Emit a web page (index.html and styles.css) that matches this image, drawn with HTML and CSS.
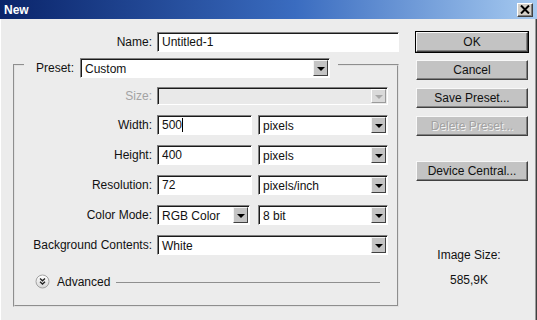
FILE: index.html
```html
<!DOCTYPE html>
<html lang="en">
<head>
    <meta charset="UTF-8">
    <title>New</title>
    <link rel="stylesheet" href="styles.css">
</head>
<body>
    <div class="window">
        <div class="titlebar">
            <span class="title">New</span>
            <span class="close-btn">
                <svg width="10" height="9" viewBox="0 0 10 9">
                    <path d="M1 0.5 L9 8.5 M9 0.5 L1 8.5" stroke="#000" stroke-width="2" fill="none"/>
                </svg>
            </span>
        </div>

        <div class="content">
            <div class="main">
                <div class="name-row">
                    <span class="field-label">Name:</span>
                    <div class="textbox textbox-wide">Untitled-1</div>
                </div>

                <fieldset class="group">
                    <legend class="group-legend">
                        <span class="legend-label">Preset:</span>
                        <div class="select select-preset">
                            <span class="select-value">Custom</span>
                            <span class="select-arrow"></span>
                        </div>
                    </legend>

                    <div class="form-grid">
                        <span class="field-label disabled size-label">Size:</span>
                        <div class="select select-full select-size disabled">
                            <span class="select-value"></span>
                            <span class="select-arrow"></span>
                        </div>

                        <span class="field-label">Width:</span>
                        <div class="pair">
                            <div class="textbox textbox-num">500<span class="caret"></span></div>
                            <div class="select select-unit">
                                <span class="select-value">pixels</span>
                                <span class="select-arrow"></span>
                            </div>
                        </div>

                        <span class="field-label">Height:</span>
                        <div class="pair">
                            <div class="textbox textbox-num">400</div>
                            <div class="select select-unit">
                                <span class="select-value">pixels</span>
                                <span class="select-arrow"></span>
                            </div>
                        </div>

                        <span class="field-label">Resolution:</span>
                        <div class="pair">
                            <div class="textbox textbox-num">72</div>
                            <div class="select select-unit">
                                <span class="select-value">pixels/inch</span>
                                <span class="select-arrow"></span>
                            </div>
                        </div>

                        <span class="field-label">Color Mode:</span>
                        <div class="pair">
                            <div class="select select-mode">
                                <span class="select-value">RGB Color</span>
                                <span class="select-arrow"></span>
                            </div>
                            <div class="select select-unit">
                                <span class="select-value">8 bit</span>
                                <span class="select-arrow"></span>
                            </div>
                        </div>

                        <span class="field-label">Background Contents:</span>
                        <div class="select select-full">
                            <span class="select-value">White</span>
                            <span class="select-arrow"></span>
                        </div>
                    </div>

                    <div class="advanced">
                        <svg class="advanced-icon" width="15" height="15" viewBox="0 0 15 15">
                            <defs>
                                <linearGradient id="advGrad" x1="0" y1="0" x2="0" y2="1">
                                    <stop offset="0" stop-color="#ffffff"/>
                                    <stop offset="1" stop-color="#d6d6d6"/>
                                </linearGradient>
                            </defs>
                            <circle cx="7.5" cy="7.5" r="6.5" fill="url(#advGrad)" stroke="#a2a2a2"/>
                            <polyline points="5,4.5 7.5,6.8 10,4.5" fill="none" stroke="#222" stroke-width="1.3"/>
                            <polyline points="5,7.8 7.5,10.1 10,7.8" fill="none" stroke="#222" stroke-width="1.3"/>
                        </svg>
                        <span class="advanced-label">Advanced</span>
                        <span class="advanced-line"></span>
                    </div>
                </fieldset>
            </div>

            <div class="side">
                <div class="btn btn-default">OK</div>
                <div class="btn">Cancel</div>
                <div class="btn">Save Preset...</div>
                <div class="btn disabled">Delete Preset...</div>
                <div class="btn btn-device">Device Central...</div>

                <div class="image-size">
                    <div class="image-size-label">Image Size:</div>
                    <div class="image-size-value">585,9K</div>
                </div>
            </div>
        </div>
    </div>
</body>
</html>
```

FILE: styles.css
```css
* {
    margin: 0;
    padding: 0;
    box-sizing: border-box;
}

body {
    font-family: 'Liberation Sans', Arial, sans-serif;
    font-size: 12px;
    color: #111;
    background: #ececec;
}

.window {
    width: 537px;
    height: 320px;
    background: #ececec;
    display: flex;
    flex-direction: column;
    box-shadow: inset 1px 0 #fff, inset -1px 0 #404040, inset -2px 0 #9a9a9a;
}

/* title bar */
.titlebar {
    height: 19px;
    background: linear-gradient(to right, #0a246a, #3a6cc0 55%, #a6caf0);
    display: flex;
    align-items: center;
    justify-content: space-between;
    padding: 0 4px 0 4px;
}

.title {
    color: #fff;
    font-weight: bold;
    font-size: 12px;
}

.close-btn {
    width: 16px;
    height: 14px;
    background: #d4d0c8;
    border: 1px solid;
    border-color: #fff #404040 #404040 #fff;
    box-shadow: inset -1px -1px #808080;
    display: flex;
    align-items: center;
    justify-content: center;
}

/* body */
.content {
    flex: 1;
    display: flex;
    gap: 17px;
    padding: 13px 9px 0 13px;
}

.main {
    width: 386px;
    display: flex;
    flex-direction: column;
}

.field-label {
    text-align: right;
    white-space: nowrap;
    line-height: 20px;
}

.field-label.disabled {
    color: #a3a3a3;
}

.size-label {
    line-height: 18px;
}

.name-row {
    display: grid;
    grid-template-columns: 139px 242px;
    column-gap: 5px;
}

/* text boxes and drop-downs */
.textbox,
.select {
    height: 20px;
    background: #fff;
    border: 1px solid;
    border-color: #808080 #fff #fff #808080;
    box-shadow: inset 1px 1px #1a1a1a;
    line-height: 18px;
    padding-left: 4px;
    white-space: nowrap;
}

.textbox-num {
    width: 95px;
}

.caret {
    display: inline-block;
    width: 1px;
    height: 14px;
    background: #000;
    vertical-align: -3px;
}

.select {
    display: flex;
    align-items: center;
}

.select-value {
    flex: 1;
    padding-top: 2px;
}

.select-arrow {
    width: 15px;
    height: 16px;
    margin-right: 1px;
    background: #c4c4c4;
    border: 1px solid;
    border-color: #f4f4f4 #404040 #404040 #f4f4f4;
    display: flex;
    align-items: center;
    justify-content: center;
}

.select-arrow::after {
    content: "";
    border-left: 4px solid transparent;
    border-right: 4px solid transparent;
    border-top: 4px solid #000;
    margin-top: 1px;
}

.select.disabled {
    background: #e9e9e9;
}

.select-size {
    height: 18px;
}

.select-size .select-arrow {
    height: 14px;
}

.select.disabled .select-arrow {
    background: #dadada;
    border-color: #fff #9a9a9a #9a9a9a #fff;
}

.select.disabled .select-arrow::after {
    border-top-color: #a8a8a8;
}

.select-preset {
    width: 250px;
}

.select-unit {
    width: 130px;
}

.select-mode {
    width: 93px;
}

/* group box */
.group {
    border: 2px groove #e2e2e2;
    padding: 9px 9px 16px 0;
}

.group-legend {
    display: flex;
    align-items: center;
    margin-left: 9px;
    padding: 6px 8px 0 12px;
}

.legend-label {
    width: 44px;
}

.form-grid {
    display: grid;
    grid-template-columns: 137px 231px;
    column-gap: 5px;
    row-gap: 10px;
}

.pair {
    display: flex;
    justify-content: space-between;
}

.advanced {
    display: flex;
    align-items: center;
    margin-top: 19px;
    padding-left: 20px;
}

.advanced-label {
    margin-left: 7px;
}

.advanced-line {
    flex: 1;
    height: 1px;
    background: #8f8f8f;
    margin: 1px 8px 0 6px;
}

/* buttons column */
.side {
    width: 112px;
    display: flex;
    flex-direction: column;
    gap: 8px;
}

.btn {
    height: 20px;
    background: #c3c3c3;
    border: 1px solid;
    border-color: #f8f8f8 #404040 #404040 #f8f8f8;
    box-shadow: inset -1px -1px #808080;
    text-align: center;
    line-height: 18px;
}

.btn-default {
    box-shadow: 0 0 0 1px #000, inset -1px -1px #808080;
}

.btn.disabled {
    color: #a2a2a2;
    text-shadow: 1px 1px #f4f4f4;
}

.btn-device {
    margin-top: 17px;
}

.image-size {
    margin-top: 58px;
    text-align: center;
    padding-right: 6px;
    line-height: 16px;
}

.image-size-value {
    margin-top: 9px;
}
```
